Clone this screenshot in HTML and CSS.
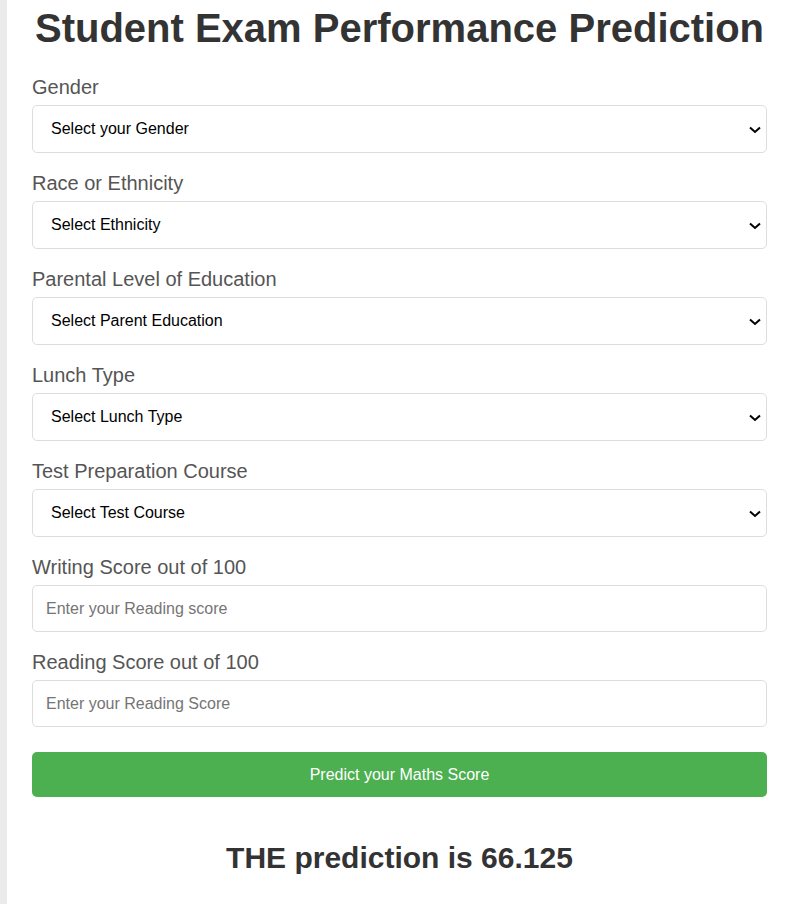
FILE: index.html
```html
<!DOCTYPE html>
<html lang="en">
<head>
<meta charset="utf-8">
<title>Student Exam Performance Prediction</title>
<link rel="stylesheet" href="styles.css">
</head>
<body>
<div class="page">
  <div class="container">
    <h1 class="title">Student Exam Performance Prediction</h1>
    <form class="form">
      <div class="group">
        <label class="label" for="gender">Gender</label>
        <div class="select-wrap">
          <select class="control select" id="gender">
            <option>Select your Gender</option>
            <option>male</option>
            <option>female</option>
          </select>
          <svg class="chevron" width="12" height="8" viewBox="0 0 12 8" aria-hidden="true"><polyline points="1,1.5 6,6 11,1.5" fill="none" stroke="#000" stroke-width="2"/></svg>
        </div>
      </div>
      <div class="group">
        <label class="label" for="eth">Race or Ethnicity</label>
        <div class="select-wrap">
          <select class="control select" id="eth">
            <option>Select Ethnicity</option>
          </select>
          <svg class="chevron" width="12" height="8" viewBox="0 0 12 8" aria-hidden="true"><polyline points="1,1.5 6,6 11,1.5" fill="none" stroke="#000" stroke-width="2"/></svg>
        </div>
      </div>
      <div class="group">
        <label class="label" for="edu">Parental Level of Education</label>
        <div class="select-wrap">
          <select class="control select" id="edu">
            <option>Select Parent Education</option>
          </select>
          <svg class="chevron" width="12" height="8" viewBox="0 0 12 8" aria-hidden="true"><polyline points="1,1.5 6,6 11,1.5" fill="none" stroke="#000" stroke-width="2"/></svg>
        </div>
      </div>
      <div class="group">
        <label class="label" for="lunch">Lunch Type</label>
        <div class="select-wrap">
          <select class="control select" id="lunch">
            <option>Select Lunch Type</option>
          </select>
          <svg class="chevron" width="12" height="8" viewBox="0 0 12 8" aria-hidden="true"><polyline points="1,1.5 6,6 11,1.5" fill="none" stroke="#000" stroke-width="2"/></svg>
        </div>
      </div>
      <div class="group">
        <label class="label" for="course">Test Preparation Course</label>
        <div class="select-wrap">
          <select class="control select" id="course">
            <option>Select Test Course</option>
          </select>
          <svg class="chevron" width="12" height="8" viewBox="0 0 12 8" aria-hidden="true"><polyline points="1,1.5 6,6 11,1.5" fill="none" stroke="#000" stroke-width="2"/></svg>
        </div>
      </div>
      <div class="group">
        <label class="label" for="writing">Writing Score out of 100</label>
        <input class="control input" id="writing" type="number" placeholder="Enter your Reading score">
      </div>
      <div class="group">
        <label class="label" for="reading">Reading Score out of 100</label>
        <input class="control input" id="reading" type="number" placeholder="Enter your Reading Score">
      </div>
      <button class="btn" type="button">Predict your Maths Score</button>
    </form>
    <h2 class="result">THE prediction is 66.125</h2>
  </div>
</div>
</body>
</html>
```
FILE: styles.css
```css
html, body {
  margin: 0;
  padding: 0;
  overflow: hidden;
  background: #ebebeb;
  font-family: "Liberation Sans", Arial, sans-serif;
}

.page {
  display: flex;
  padding-left: 7px;
}

.container {
  flex: 0 0 785px;
  width: 785px;
  box-sizing: border-box;
  background: #ffffff;
  padding: 5px 25px 40px;
  min-height: 904px;
}

.title {
  margin: 0 0 25px;
  font-size: 40px;
  line-height: 46px;
  font-weight: bold;
  color: #333333;
  text-align: center;
}

.form {
  display: flex;
  flex-direction: column;
}

.group {
  display: flex;
  flex-direction: column;
  margin-bottom: 19px;
}

.label {
  display: block;
  font-size: 20px;
  line-height: 23px;
  color: #555555;
  margin-bottom: 6px;
}

.control {
  box-sizing: border-box;
  width: 100%;
  margin: 0;
  border: 1px solid #dddddd;
  border-radius: 5px;
  background: #ffffff;
  font-family: "Liberation Sans", Arial, sans-serif;
  font-size: 16px;
  color: #000000;
}

.select-wrap {
  position: relative;
}

.select {
  display: block;
  height: 48px;
  padding: 0 30px 0 18px;
  -webkit-appearance: none;
  appearance: none;
  line-height: 46px;
}

.chevron {
  position: absolute;
  right: 6px;
  top: 21px;
  pointer-events: none;
}

.input {
  display: block;
  height: 47px;
  padding: 0 13px;
}

.input::placeholder {
  color: #757575;
}

.group:last-of-type {
  margin-bottom: 25px;
}

.btn {
  height: 45px;
  width: 100%;
  border: none;
  border-radius: 5px;
  background: #4caf50;
  color: #ffffff;
  font-family: "Liberation Sans", Arial, sans-serif;
  font-size: 16px;
  cursor: pointer;
}

.result {
  margin: 43px 0 0;
  font-size: 30px;
  line-height: 35px;
  font-weight: bold;
  color: #333333;
  text-align: center;
}
```
